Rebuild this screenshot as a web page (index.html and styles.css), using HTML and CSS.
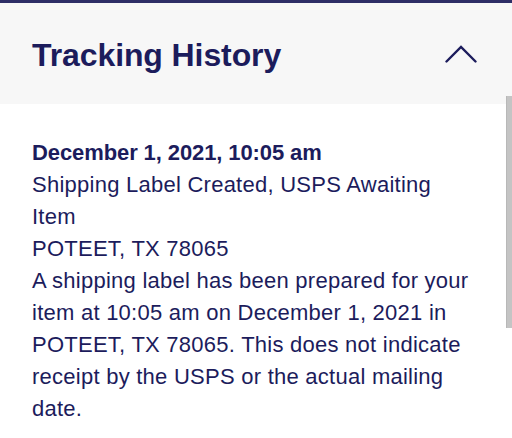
FILE: index.html
```html
<!DOCTYPE html>
<html>
<head>
<meta charset="utf-8">
<link rel="stylesheet" href="styles.css">
</head>
<body>
<div class="panel">
  <div class="header">
    <h2 class="title">Tracking History</h2>
    <svg class="chevron" width="32" height="18" viewBox="0 0 32 18"><polyline points="1.5,16.5 16,2 30.5,16.5" fill="none" stroke="#1c1c5c" stroke-width="2.4" stroke-linecap="round" stroke-linejoin="miter"/></svg>
  </div>
  <div class="content">
    <div class="event">
      <div class="date">December 1, 2021, 10:05 am</div>
      <div>Shipping Label Created, USPS Awaiting Item</div>
      <div>POTEET, TX 78065</div>
      <div>A shipping label has been prepared for your item at 10:05 am on December 1, 2021 in POTEET, TX 78065. This does not indicate receipt by the USPS or the actual mailing date.</div>
    </div>
  </div>
  <div class="scrollbar"></div>
</div>
</body>
</html>
```
FILE: styles.css
```css
html, body {
  margin: 0;
  padding: 0;
  background: #ffffff;
}
body {
  font-family: "Liberation Sans", Arial, Helvetica, sans-serif;
  color: #1c1c5c;
  width: 512px;
  height: 438px;
  overflow: hidden;
}
.panel {
  position: relative;
  border-top: 3px solid #2e2e66;
}
.header {
  background: #f7f7f7;
  height: 101px;
  display: flex;
  align-items: center;
  justify-content: space-between;
  padding: 0 35px 0 32px;
  box-sizing: border-box;
}
.title {
  margin: 0;
  font-size: 32px;
  font-weight: bold;
  line-height: 36px;
  color: #1c1c5c;
  padding-top: 2px;
  letter-spacing: -0.1px;
}
.chevron {
  display: block;
  margin-top: 1px;
}
.content {
  padding: 33px 38px 0 32px;
}
.event {
  font-size: 22px;
  line-height: 32px;
  letter-spacing: 0.25px;
}
.date {
  font-weight: bold;
  letter-spacing: -0.1px;
}
.scrollbar {
  position: absolute;
  right: 0;
  top: 93px;
  width: 6px;
  height: 232px;
  background: #c4c4c4;
  border-left: 1px solid #b8b8b8;
  box-sizing: border-box;
}
```
